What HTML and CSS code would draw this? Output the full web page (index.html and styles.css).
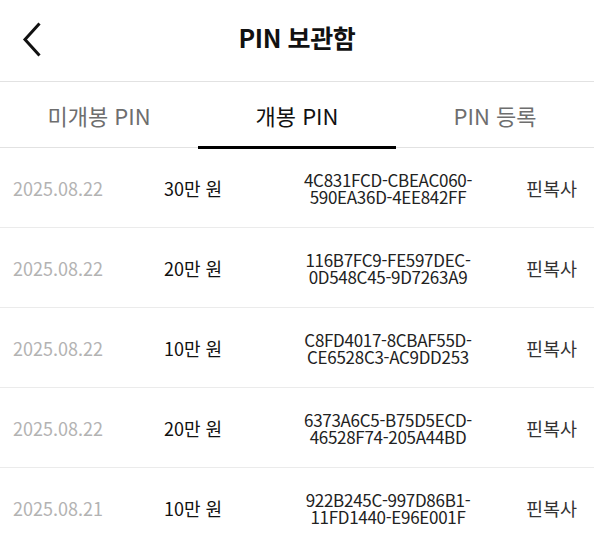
FILE: index.html
```html
<!DOCTYPE html>
<html lang="ko">
<head>
<meta charset="utf-8">
<link rel="stylesheet" href="styles.css">
</head>
<body>
<header class="topbar">
  <button class="back" aria-label="뒤로">
    <svg width="24" height="36" viewBox="0 0 24 36"><polyline points="18.5,2.5 4,18.5 18.5,34.5" fill="none" stroke="#111" stroke-width="3" stroke-linecap="butt" stroke-linejoin="miter"/></svg>
  </button>
  <h1 class="title">PIN 보관함</h1>
</header>
<nav class="tabs">
  <div class="tab">미개봉 PIN</div>
  <div class="tab active">개봉 PIN</div>
  <div class="tab">PIN 등록</div>
</nav>
<main class="list">
  <div class="row"><span class="date">2025.08.22</span><span class="amt">30만 원</span><span class="code">4C831FCD-CBEAC060-<br>590EA36D-4EE842FF</span><span class="copy">핀복사</span></div>
  <div class="row"><span class="date">2025.08.22</span><span class="amt">20만 원</span><span class="code">116B7FC9-FE597DEC-<br>0D548C45-9D7263A9</span><span class="copy">핀복사</span></div>
  <div class="row"><span class="date">2025.08.22</span><span class="amt">10만 원</span><span class="code">C8FD4017-8CBAF55D-<br>CE6528C3-AC9DD253</span><span class="copy">핀복사</span></div>
  <div class="row"><span class="date">2025.08.22</span><span class="amt">20만 원</span><span class="code">6373A6C5-B75D5ECD-<br>46528F74-205A44BD</span><span class="copy">핀복사</span></div>
  <div class="row"><span class="date">2025.08.21</span><span class="amt">10만 원</span><span class="code">922B245C-997D86B1-<br>11FD1440-E96E001F</span><span class="copy">핀복사</span></div>
</main>
</body>
</html>
```
FILE: styles.css
```css
* { box-sizing: border-box; }
html, body { margin: 0; padding: 0; background: #fff; }
body {
  font-family: "Noto Sans CJK KR", "Noto Sans", sans-serif;
  color: #111;
  width: 594px;
  overflow: hidden;
}
.topbar {
  height: 82px;
  border-bottom: 1px solid #e2e2e2;
  display: flex;
  align-items: center;
  justify-content: center;
  position: relative;
}
.back {
  position: absolute;
  left: 21px;
  top: 21px;
  border: 0;
  background: none;
  padding: 0;
  width: 24px;
  height: 36px;
}
.back svg { display: block; }
.title {
  margin: 0;
  font-size: 25px;
  font-weight: 700;
  letter-spacing: -0.4px;
  margin-top: -7px;
}
.tabs {
  display: grid;
  grid-template-columns: repeat(3, 1fr);
  height: 66px;
  border-bottom: 1px solid #e2e2e2;
}
.tab {
  display: flex;
  align-items: center;
  justify-content: center;
  font-size: 22px;
  color: #6e6e6e;
  padding-top: 0;
  position: relative;
}
.tab.active { color: #111; }
.tab.active::after {
  content: "";
  position: absolute;
  left: 0;
  right: 0;
  bottom: -2px;
  height: 3px;
  background: #000;
}
.row {
  display: grid;
  grid-template-columns: 151px 94px 260px 1fr;
  align-items: center;
  height: 80px;
  padding: 0 17px 0 13px;
  border-bottom: 1px solid #ebebeb;
}
.date { font-size: 18px; color: #b3b3b3; }
.amt { font-size: 18px; color: #111; }
.code {
  font-size: 17px;
  line-height: 17px;
  color: #222;
  text-align: center;
  letter-spacing: -0.3px;
}
.copy { font-size: 18.5px; color: #333; justify-self: end; }
```
